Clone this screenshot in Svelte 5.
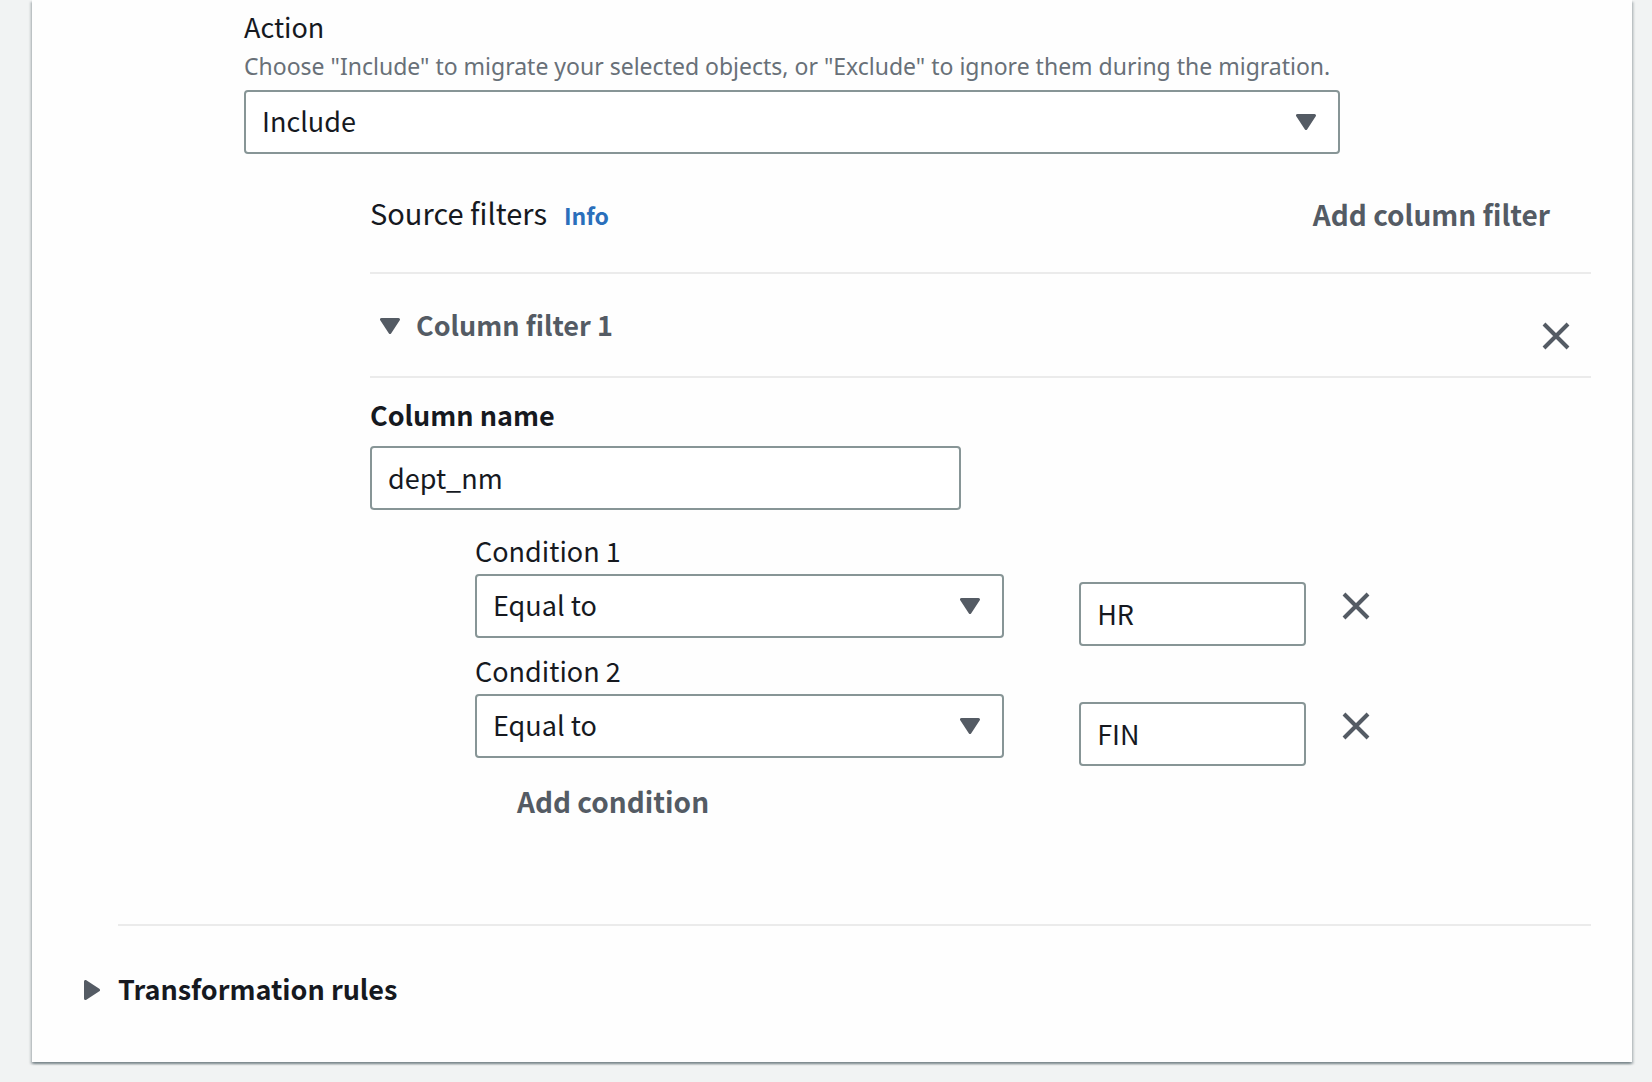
<script>
  let action = $state('Include');
  let columnName = $state('dept_nm');
  let conditions = $state([
    { id: 1, operator: 'Equal to', value: 'HR' },
    { id: 2, operator: 'Equal to', value: 'FIN' }
  ]);
  const operators = ['Equal to', 'Not equal to', 'Less than or equal to', 'Greater than or equal to'];

  function addCondition() {
    const id = Math.max(0, ...conditions.map((c) => c.id)) + 1;
    conditions.push({ id, operator: 'Equal to', value: '' });
  }

  function removeCondition(id) {
    conditions = conditions.filter((c) => c.id !== id);
  }
</script>

{#snippet caretDown()}
  <svg class="caret" width="20" height="16" viewBox="0 0 20 16" aria-hidden="true">
    <path d="M1.5 1.5h17L10 14.5z" />
  </svg>
{/snippet}

{#snippet cross()}
  <svg width="36" height="36" viewBox="0 0 36 36" aria-hidden="true">
    <path class="cross" d="M6 6l24 24M30 6l-24 24" />
  </svg>
{/snippet}

<main class="card">
  <div class="rule">
    <div class="action">
      <label for="action">Action</label>
      <p class="hint" id="action-hint">
        Choose "Include" to migrate your selected objects, or "Exclude" to ignore them during the migration.
      </p>
      <div class="select">
        <select id="action" aria-describedby="action-hint" bind:value={action}>
          <option>Include</option>
          <option>Exclude</option>
        </select>
        {@render caretDown()}
      </div>
    </div>

    <section class="filters">
      <header class="filters-head">
        <div class="title">
          <h2>Source filters</h2>
          <a href="#info">Info</a>
        </div>
        <button type="button" class="text-button">Add column filter</button>
      </header>

      <div class="filter-bar">
        <button type="button" class="toggle" aria-expanded="true">
          {@render caretDown()}
          Column filter 1
        </button>
        <button type="button" class="close" aria-label="Remove column filter 1">{@render cross()}</button>
      </div>

      <div class="column">
        <label class="strong" for="column-name">Column name</label>
        <input id="column-name" type="text" bind:value={columnName} />
      </div>

      <div class="conditions">
        {#each conditions as condition (condition.id)}
          <div class="condition">
            <label for="operator-{condition.id}">Condition {condition.id}</label>
            <div class="select">
              <select id="operator-{condition.id}" bind:value={condition.operator}>
                {#each operators as operator}
                  <option>{operator}</option>
                {/each}
              </select>
              {@render caretDown()}
            </div>
            <input
              class="value"
              type="text"
              aria-label="Condition {condition.id} value"
              bind:value={condition.value}
            />
            <button
              type="button"
              class="close"
              aria-label="Remove condition {condition.id}"
              onclick={() => removeCondition(condition.id)}
            >
              {@render cross()}
            </button>
          </div>
        {/each}
        <button type="button" class="text-button add-condition" onclick={addCondition}>Add condition</button>
      </div>
    </section>
  </div>

  <button type="button" class="toggle transformation" aria-expanded="false">
    <svg class="caret" width="16" height="20" viewBox="0 0 16 20" aria-hidden="true">
      <path d="M1.5 1.5v17L14.5 10z" />
    </svg>
    Transformation rules
  </button>
</main>

<style>
  :global(body) {
    background: #f1f3f3;
  }

  .card {
    box-sizing: border-box;
    margin: 0 20px 20px 32px;
    padding: 9px 41px 55px 52px;
    background: #fefefe;
    color: #16191f;
    font: 27px/36px 'Noto Sans CJK JP', 'Noto Sans', sans-serif;
    box-shadow:
      0 2px 2px rgba(0, 28, 36, 0.3),
      2px 2px 2px rgba(0, 28, 36, 0.15),
      -2px 2px 2px rgba(0, 28, 36, 0.15);
  }

  .rule {
    margin-left: 34px;
    padding-bottom: 105px;
    border-bottom: 2px solid #ebebeb;
  }

  label {
    display: block;
  }

  .strong {
    font-weight: 700;
  }

  .action {
    margin: 0 251px 0 126px;
  }

  .hint {
    margin: 5px 0 8px;
    color: #687078;
    font: 23px/32px 'Noto Sans', sans-serif;
  }

  input,
  select {
    box-sizing: border-box;
    width: 100%;
    height: 64px;
    margin: 0;
    padding: 0 16px 2px;
    border: 2px solid #879596;
    border-radius: 4px;
    background: #fff;
    color: inherit;
    font: inherit;
  }

  .select {
    display: grid;
    align-items: center;
  }

  .select > :global(*) {
    grid-area: 1 / 1;
  }

  .select .caret {
    justify-self: end;
    margin-right: 24px;
    pointer-events: none;
  }

  select {
    appearance: none;
    padding: 0 56px 2px 16px;
  }

  .caret path {
    fill: #545b64;
    stroke: #545b64;
    stroke-width: 3;
    stroke-linejoin: round;
  }

  .cross {
    fill: none;
    stroke: #545b64;
    stroke-width: 4;
  }

  button {
    padding: 0;
    border: 0;
    background: none;
    color: #545b64;
    font: inherit;
    font-weight: 700;
    cursor: pointer;
  }

  .close {
    display: flex;
  }

  .text-button {
    font-size: 28px;
  }

  .filters {
    margin-left: 252px;
  }

  .filters-head {
    display: flex;
    align-items: center;
    justify-content: space-between;
    padding: 40px 41px 39px 0;
  }

  .title {
    display: flex;
    align-items: baseline;
    gap: 17px;
  }

  h2 {
    margin: 0;
    font-size: 29px;
    font-weight: 400;
    line-height: 36px;
  }

  a {
    color: #2a6fbb;
    font-size: 23px;
    font-weight: 700;
    text-decoration: none;
  }

  .filter-bar {
    display: flex;
    align-items: flex-start;
    justify-content: space-between;
    padding: 33px 17px 22px 10px;
    border: solid #ebebeb;
    border-width: 2px 0;
  }

  .filter-bar .close {
    margin-top: 11px;
  }

  .toggle {
    display: flex;
    align-items: center;
    gap: 16px;
  }

  .toggle .caret {
    margin-top: 2px;
  }

  .column {
    display: grid;
    gap: 13px;
    width: 48.4%;
    padding: 19px 0 23px;
  }

  .conditions {
    display: grid;
    gap: 6px;
    margin-left: 105px;
  }

  .condition {
    display: grid;
    grid-template-columns: 7fr 75px 3fr 285px;
    grid-template-rows: 36px 64px;
    row-gap: 5px;
    align-items: center;
    padding-bottom: 9px;
  }

  .condition label {
    grid-column: 1 / -1;
  }

  .value {
    grid-column: 3;
    align-self: start;
    margin-top: 8px;
  }

  .condition .close {
    margin-left: 32px;
  }

  .add-condition {
    justify-self: start;
    margin: 10px 0 0 42px;
  }

  .transformation {
    gap: 18px;
    margin-top: 45px;
    color: #16191f;
  }
</style>
